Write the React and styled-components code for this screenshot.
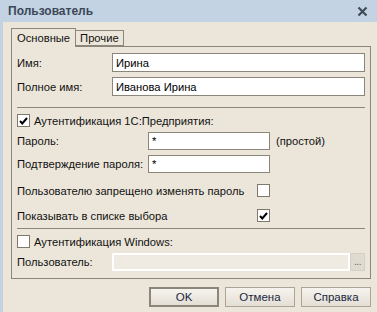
import React, { useState } from "react";
import styled, { createGlobalStyle } from "styled-components";

const Global = createGlobalStyle`
  html, body { margin: 0; padding: 0; }
  body { font-family: "Liberation Sans", Arial, sans-serif; font-size: 11.2px; color: #111; }
`;

const Window = styled.div`
  width: 374px;
  height: 312px;
  background: #ece6da;
  border-left: 3px solid #c3d3e3;
  display: flex;
  flex-direction: column;
`;

const TitleBar = styled.div`
  height: 22px;
  background: #c3d3e3;
  display: flex;
  align-items: center;
  justify-content: space-between;
  margin-left: -3px;
  padding: 0 9px 0 8px;
`;

const Title = styled.span`
  font-weight: bold;
  font-size: 12px;
  color: #3c4858;
`;

const CloseBtn = styled.div`
  width: 11px;
  height: 11px;
  display: flex;
  margin-top: 1px;
`;

const TabRow = styled.div`
  display: flex;
  align-items: flex-end;
  margin: 6px 0 0 8px;
  height: 18px;
`;

const Tab = styled.div`
  height: ${(p) => (p.active ? "18px" : "14px")};
  padding: 0 ${(p) => (p.active ? "5px" : "4px")};
  display: flex;
  align-items: center;
  border: 1px solid #8c8579;
  border-bottom: ${(p) => (p.active ? "none" : "1px solid #8c8579")};
  border-left: ${(p) => (p.active ? "1px solid #8c8579" : "none")};
  background: #ece6da;
  margin-bottom: ${(p) => (p.active ? "-1px" : "0")};
  position: relative;
  z-index: ${(p) => (p.active ? 1 : 0)};
  cursor: default;
`;

const Panel = styled.div`
  margin: 0 6px 0 8px;
  border: 1px solid #8c8579;
  padding: 6px 5px 7px 5px;
  display: flex;
  flex-direction: column;
`;

const Row = styled.div`
  display: flex;
  align-items: center;
  height: ${(p) => p.h}px;
  margin-top: ${(p) => p.mt || 0}px;
`;

const Label = styled.span`
  width: ${(p) => p.w}px;
  flex: none;
  white-space: nowrap;
`;

const Input = styled.input`
  box-sizing: border-box;
  height: 100%;
  width: ${(p) => (p.w ? `${p.w}px` : "auto")};
  flex: ${(p) => (p.w ? "none" : "1")};
  min-width: 0;
  border: 1px solid #8c8579;
  background: #fff;
  font: inherit;
  padding: 0 3px;
  outline: none;
  color: #000;
  &:disabled {
    border: 2px solid #fff;
    background: #efebe2;
  }
`;

const Line = styled.div`
  height: 1px;
  background: #8c8579;
  margin-top: ${(p) => p.mt}px;
`;

const Box = styled.span`
  box-sizing: border-box;
  width: 13px;
  height: 13px;
  border: 1px solid #7f786c;
  background: #fff;
  display: inline-flex;
  align-items: center;
  justify-content: center;
  flex: none;
`;

const CheckLabel = styled.label`
  display: flex;
  align-items: center;
  gap: 4px;
  cursor: default;
`;

const Note = styled.span`
  margin-left: 6px;
`;

const DotsBtn = styled.div`
  box-sizing: border-box;
  width: 15px;
  height: 100%;
  background: #e0dbd1;
  border: 1px solid #d6d0c4;
  color: #6a655c;
  font-size: 10px;
  display: flex;
  align-items: flex-end;
  justify-content: center;
  padding-bottom: 3px;
  letter-spacing: -0.5px;
`;

const Buttons = styled.div`
  display: flex;
  justify-content: flex-end;
  gap: 6px;
  padding: 8px 6px 0 0;
`;

const Button = styled.button`
  box-sizing: border-box;
  width: 70px;
  height: 20px;
  font: inherit;
  font-size: 11.5px;
  color: #1a2740;
  background: linear-gradient(#f6f3ee, #e4dfd5);
  border: ${(p) => (p.primary ? "2px solid #8c8579" : "1px solid #aaa497")};
  padding: 0;
  cursor: default;
`;

const Check = ({ checked }) => (
  <Box>
    {checked && (
      <svg width="9" height="8" viewBox="0 0 9 8">
        <path d="M1 4 L3.3 6.5 L8 1" fill="none" stroke="#000" strokeWidth="2" />
      </svg>
    )}
  </Box>
);

export default function App() {
  const [tab, setTab] = useState(0);
  return (
    <>
      <Global />
      <Window>
        <TitleBar>
          <Title>Пользователь</Title>
          <CloseBtn>
            <svg width="11" height="11" viewBox="0 0 11 11">
              <path d="M1.5 1.5 L9.5 9.5 M9.5 1.5 L1.5 9.5" stroke="#404b57" strokeWidth="2.2" />
            </svg>
          </CloseBtn>
        </TitleBar>
        <TabRow>
          <Tab active={tab === 0} onClick={() => setTab(0)}>Основные</Tab>
          <Tab active={tab === 1} onClick={() => setTab(1)}>Прочие</Tab>
        </TabRow>
        <Panel>
          <Row h={19}>
            <Label w={95}>Имя:</Label>
            <Input defaultValue="Ирина" />
          </Row>
          <Row h={19} mt={5}>
            <Label w={95}>Полное имя:</Label>
            <Input defaultValue="Иванова Ирина" />
          </Row>
          <Line mt={11} />
          <Row h={13} mt={6}>
            <CheckLabel>
              <Check checked />
              Аутентификация 1С:Предприятия:
            </CheckLabel>
          </Row>
          <Row h={18} mt={5}>
            <Label w={131}>Пароль:</Label>
            <Input w={122} defaultValue="*" />
            <Note>(простой)</Note>
          </Row>
          <Row h={18} mt={5}>
            <Label w={131}>Подтверждение пароля:</Label>
            <Input w={122} defaultValue="*" />
          </Row>
          <Row h={13} mt={11}>
            <Label w={240}>Пользователю запрещено изменять пароль</Label>
            <Check />
          </Row>
          <Row h={13} mt={12}>
            <Label w={240}>Показывать в списке выбора</Label>
            <Check checked />
          </Row>
          <Line mt={6} />
          <Row h={13} mt={6}>
            <CheckLabel>
              <Check />
              Аутентификация Windows:
            </CheckLabel>
          </Row>
          <Row h={18} mt={5}>
            <Label w={95}>Пользователь:</Label>
            <Input disabled />
            <DotsBtn>...</DotsBtn>
          </Row>
        </Panel>
        <Buttons>
          <Button primary>OK</Button>
          <Button>Отмена</Button>
          <Button>Справка</Button>
        </Buttons>
      </Window>
    </>
  );
}
